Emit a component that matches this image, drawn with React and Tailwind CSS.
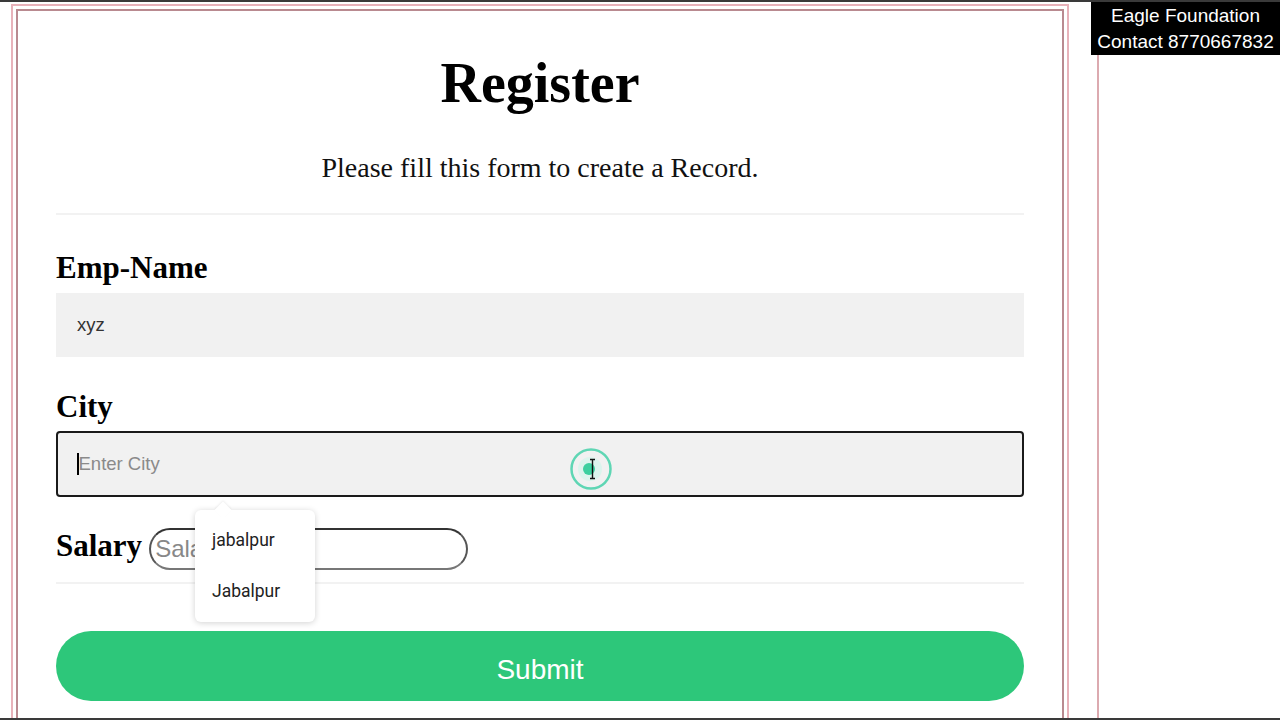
import React from 'react'

const serif = { fontFamily: '"Liberation Serif", "Times New Roman", serif' }
const sans = { fontFamily: '"Liberation Sans", Arial, sans-serif' }

function CursorMark() {
  return (
    <svg className="absolute left-[513px] top-[16px] pointer-events-none" width="44" height="44" viewBox="0 0 44 44">
      <circle cx="22" cy="22" r="19.5" fill="none" stroke="#5fd6b4" strokeWidth="2.5" />
      <circle cx="21" cy="22" r="12" fill="#d9f4ec" opacity="0.9" />
      <circle cx="20" cy="22" r="6" fill="#3ccf9f" />
      <path d="M21 12.5h5M23.5 12.5v19M21 31.5h5" stroke="#111" strokeWidth="1.4" fill="none" />
    </svg>
  )
}

export default function App() {
  return (
    <div className="w-[1280px] h-[720px] bg-white flex flex-col overflow-hidden">
      <div className="h-[2px] bg-[#3a3a3a] shrink-0" />
      <div className="flex-1 flex overflow-hidden">
        <div className="ml-[11px] mt-[2px] w-[1058px] h-[760px] border-2 border-[#e8b2ba] p-[3px] shrink-0">
          <div className="h-full border-2 border-[#b98a90] px-[38px] pt-[40px] flex flex-col">
            <h1 className="text-[56px] leading-[64px] font-bold text-center text-black" style={serif}>Register</h1>
            <p className="mt-[37px] text-[28px] leading-[32px] text-center text-[#111]" style={serif}>
              Please fill this form to create a Record.
            </p>
            <div className="mt-[29px] h-[2px] bg-[#f2f2f2]" />

            <label className="mt-[35px] text-[31px] leading-[36px] font-bold text-black" style={serif}>Emp-Name</label>
            <div className="mt-[7px] h-[64px] bg-[#f1f1f1] flex items-center pl-[21px] text-[18.5px] text-[#333]" style={sans}>
              xyz
            </div>

            <label className="mt-[32px] text-[31px] leading-[36px] font-bold text-black" style={serif}>City</label>
            <div className="relative mt-[6px]">
              <div className="h-[66px] bg-[#f1f1f1] border-2 border-[#1a1a1a] rounded-[4px] flex items-center pl-[19px] text-[18.5px] text-[#8a8a8a]" style={sans}>
                <span className="w-[1.5px] h-[22px] bg-black" />
                Enter City
              </div>
              <CursorMark />
              <div className="absolute left-[139px] top-[79px] w-[120px] h-[112px] bg-white rounded-[6px] shadow-[0_1px_6px_rgba(0,0,0,0.18)] z-10 flex flex-col pt-[16px] pl-[17px] text-[17.5px] text-[#222]" style={{ fontFamily: 'Roboto, "Noto Sans", sans-serif' }}>
                <div className="absolute -top-[6px] left-[22px] w-[12px] h-[12px] bg-white rotate-45 shadow-[-1px_-1px_2px_rgba(0,0,0,0.06)]" />
                <span className="relative leading-[28px]">jabalpur</span>
                <span className="relative mt-[23px] leading-[28px]">Jabalpur</span>
              </div>
            </div>

            <div className="mt-[31px] flex items-start">
              <span className="text-[31px] leading-[36px] font-bold text-black" style={serif}>Salary</span>
              <div className="ml-[7px] w-[319px] h-[42px] rounded-full border-2 border-[#555] border-t-[#333] border-b-[#777] bg-white flex items-center pl-[4px] text-[24px] text-[#888]" style={sans}>
                Salary
              </div>
            </div>
            <div className="mt-[12px] h-[2px] bg-[#f2f2f2]" />

            <button className="mt-[47px] h-[70px] pt-[8px] rounded-full bg-[#2dc77a] text-white text-[28px]" style={sans}>
              Submit
            </button>
          </div>
        </div>

        <div className="ml-[22px] w-[189px] flex flex-col shrink-0">
          <div className="h-[53px] bg-black text-white text-[19px] leading-[26px] text-center flex flex-col justify-center" style={sans}>
            <span>Eagle Foundation</span>
            <span>Contact 8770667832</span>
          </div>
          <div className="ml-[6px] flex-1 border-l-2 border-[#dcaab0]" />
        </div>
      </div>
      <div className="h-[2px] bg-[#3a3a3a] shrink-0" />
    </div>
  )
}
